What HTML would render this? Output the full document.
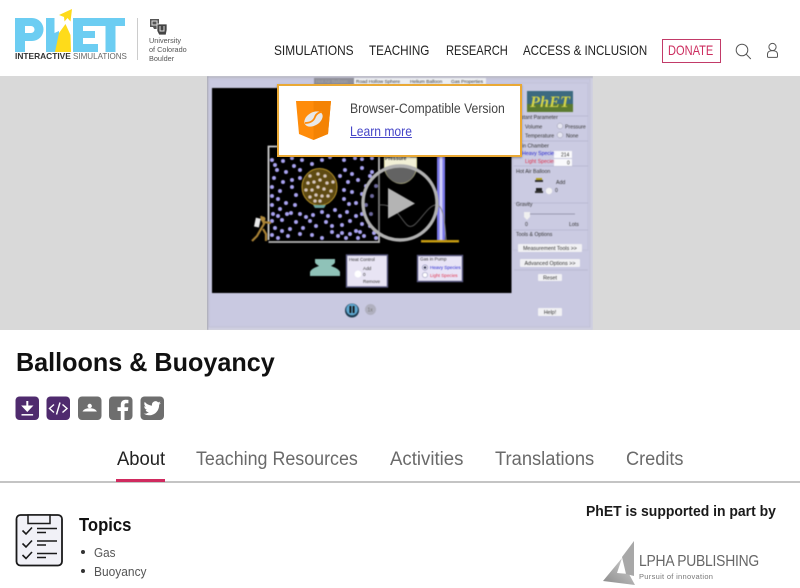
<!DOCTYPE html>
<html><head><meta charset="utf-8"><style>
html,body{margin:0;padding:0;background:#fff}
body{width:800px;height:588px;overflow:hidden;position:relative;font-family:"Liberation Sans",sans-serif}
.t{position:absolute;white-space:nowrap;line-height:1}
.n{top:43px;font-size:14px;color:#222;transform-origin:0 50%}
.tab{top:450px;font-size:19px;color:#6a6a6a;transform-origin:0 50%}
</style></head><body>

<!-- Logo -->
<svg style="position:absolute;left:0;top:0;filter:blur(.3px)" width="200" height="70" viewBox="0 0 200 70">
<path d="M15 18h17a11.500 11.500 0 0 1 0 23h-7v11H15z M25 26v7h6a3.500 3.500 0 0 0 0-7z" fill="#6ccdf2" fill-rule="evenodd"/>
<path d="M46 18h8.500v15l4.500-2v21H46z" fill="#6ccdf2"/>
<path d="M55 52l4-19 6.500-9 5 11 .5 17z" fill="#fedb1a"/>
<path d="M59 15l13-6-1.500 12.500-3-3.500-3 3.500-.5-4.500z" fill="#fedb1a"/>
<path d="M73 18h24v8H83v5h12v7H83v6h15v8H73z" fill="#6ccdf2"/>
<path d="M96 18h29v8h-9.500v26h-10V26H96z" fill="#6ccdf2"/>
<rect x="137" y="18" width="1" height="42" fill="#ccc"/>
<path d="M150 19h9v6h-2v4h-3l-1-2h-3z" fill="#555"/>
<path d="M157 24h10v6l-1 5h-7l-2-4z" fill="#444" stroke="#fff" stroke-width=".7"/>
<path d="M152 21h5v4h-5zM160 26v5h4v-5" fill="none" stroke="#ddd" stroke-width="1"/>
</svg>
<div class="t" style="left:15px;top:52px;font-size:8.400px;font-weight:bold;color:#333;transform-origin:0 50%">INTERACTIVE</div>
<div class="t" style="left:73px;top:52px;font-size:8.400px;color:#666;transform:scaleX(.96);transform-origin:0 50%">SIMULATIONS</div>
<div class="t" style="left:149px;top:37px;font-size:7.300px;line-height:8.800px;color:#555;white-space:pre">University
of Colorado
Boulder</div>

<!-- Nav -->
<div class="t n" style="left:274px;transform:scaleX(.848)">SIMULATIONS</div>
<div class="t n" style="left:369px;transform:scaleX(.835)">TEACHING</div>
<div class="t n" style="left:446px;transform:scaleX(.795)">RESEARCH</div>
<div class="t n" style="left:523px;transform:scaleX(.823)">ACCESS &amp; INCLUSION</div>
<div style="position:absolute;left:662px;top:39px;width:57px;height:22px;border:1px solid #c23a68"></div>
<div class="t n" style="left:668px;color:#cc2c5e;transform:scaleX(.79)">DONATE</div>
<svg style="position:absolute;left:730px;top:38px" width="50" height="26" viewBox="0 0 50 26" fill="none" stroke="#555" stroke-width="1">
<circle cx="12" cy="12" r="5.800"/><path d="M16.200 16.200l4.600 4.800"/>
<circle cx="42.500" cy="9" r="3.600"/><path d="M37.500 18.400v-2.200c0-2.200 2-3.600 5-3.600s5 1.400 5 3.600v2.200a1 1 0 0 1-1 1h-8a1 1 0 0 1-1-1z"/>
</svg>

<!-- Hero -->
<div style="position:absolute;left:0;top:76px;width:800px;height:254px;background:#d9d9d9"></div>
<div style="position:absolute;left:207px;top:76px;width:386px;height:254px;overflow:hidden">
<svg style="position:absolute;left:0;top:0;filter:blur(.4px)" width="386" height="254" viewBox="207 76 386 254">
<rect x="207" y="76" width="386" height="254" fill="#cfcfe0"/>
<rect x="207" y="76" width="386" height="2" fill="#b9b9c8"/>
<rect x="207" y="76" width="1" height="254" fill="#9a9aaa"/>
<rect x="209" y="79" width="381" height="248" fill="#c9c9e1" stroke="#bbbbd0" stroke-width=".6"/>
<rect x="314" y="78" width="40" height="7" fill="#8e8e98"/>
<rect x="354" y="78" width="132" height="7" fill="#eceef2"/>
<g font-family="Liberation Sans" font-size="4.800" fill="#333">
<text x="316" y="83" fill="#aaa">Hot Air Balloon</text><text x="356" y="83">Road Hollow Sphere</text><text x="410" y="83">Helium Balloon</text><text x="451" y="83">Gas Properties</text>
</g>
<rect x="212" y="88" width="299.500" height="205" fill="#000"/>
<!-- Chamber -->
<path d="M268.500 240V146.500H379" fill="none" stroke="#cfcfcf" stroke-width="1.800"/>
<path d="M268.500 242H379V146" fill="none" stroke="#b8b8b8" stroke-width="1.800"/>
<!-- Dots -->
<path stroke="#a8a2f0" stroke-width="4" stroke-linecap="round" fill="none" d="M272 160h0M275 165h0M283 161h0M292 158h0M302 160h0M312 164h0M322 160h0M330 157h0M344 160h0M355 158h0M362 159h0M372 158h0M277 170h0M286 172h0M294 166h0M300 170h0M345 170h0M352 174h0M362 168h0M370 176h0M274 178h0M283 182h0M292 180h0M300 178h0M340 176h0M348 182h0M358 180h0M366 186h0M372 172h0M272 187h0M280 191h0M292 187h0M296 195h0M344 190h0M352 192h0M362 194h0M272 196h0M278 199h0M286 203h0M295 205h0M344 199h0M349 204h0M356 203h0M366 205h0M376 186h0M372 196h0M272 205h0M280 209h0M273 214h0M278 216h0M287 214h0M291 213h0M300 214h0M306 217h0M313 215h0M322 212h0M328 216h0M335 210h0M340 216h0M347 212h0M356 216h0M362 214h0M371 214h0M272 221h0M282 220h0M296 222h0M310 221h0M326 222h0M332 226h0M342 225h0M350 221h0M362 224h0M370 226h0M275 228h0M282 231h0M288 236h0M300 234h0M312 235h0M322 238h0M332 232h0M346 238h0M356 231h0M364 236h0M374 233h0M272 235h0M278 238h0M290 229h0M316 226h0M338 236h0M342 233h0M350 234h0M360 232h0M376 238h0M358 238h0M303 228h0"/>
<!-- Balloon -->
<ellipse cx="319.500" cy="187" rx="17.500" ry="18.500" fill="#5e4a12" stroke="#b5922a" stroke-width="1"/>
<path stroke="#d4c4bc" stroke-width="3.600" stroke-linecap="round" fill="none" d="M310 176h0M318 174h0M325 176h0M308 183h0M314 182h0M320 180h0M327 183h0M333 182h0M306 190h0M312 190h0M318 187h0M324 189h0M331 191h0M310 197h0M316 195h0M322 196h0M328 196h0M315 201h0M320 201h0"/>
<path d="M313 205h13l-2 3h-9z" fill="#6aa5a0"/>
<!-- Person -->
<path d="M261 216l3 8-3 5-4 7-5 5M263 229l3 5v7M264 222l7 1" fill="none" stroke="#a98235" stroke-width="2.200"/>
<rect x="255" y="218" width="5" height="9" fill="#e8e8e8" transform="rotate(12 257 222)"/>
<circle cx="263" cy="219" r="2.500" fill="#b08a3c"/>
<!-- Pump -->
<path d="M315 259h20v3c0 2-3 3-4 4 3 1 8 3 9 6v4h-30v-4c1-3 6-5 9-6-1-1-4-2-4-4z" fill="#8fc2b8"/>
<!-- Heat control -->
<rect x="346.500" y="255" width="41" height="32" fill="#e8e4f4" stroke="#55557d" stroke-width="1.400"/>
<text x="349" y="261" font-size="4.600" fill="#333" font-family="Liberation Sans">Heat Control</text>
<text x="363" y="270" font-size="4.600" fill="#333" font-family="Liberation Sans">Add</text>
<text x="363" y="276" font-size="4.600" fill="#333" font-family="Liberation Sans">0</text>
<text x="363" y="283" font-size="4.600" fill="#333" font-family="Liberation Sans">Remove</text>
<circle cx="358" cy="274" r="3.500" fill="#fff"/>
<!-- Gas in pump -->
<rect x="417.500" y="255.500" width="45" height="26" fill="#e8e4f6" stroke="#55557d" stroke-width="1.400"/>
<text x="420" y="260.500" font-size="4.600" fill="#333" font-family="Liberation Sans">Gas in Pump</text>
<circle cx="425" cy="267.500" r="2.600" fill="#fff" stroke="#7777aa" stroke-width=".6"/><circle cx="425" cy="267.500" r="1.300" fill="#335"/>
<circle cx="425" cy="275" r="2.600" fill="#fff" stroke="#9999bb" stroke-width=".6"/>
<text x="430" y="269" font-size="4.600" fill="#2323d0" font-family="Liberation Sans">Heavy Species</text>
<text x="430" y="277" font-size="4.600" fill="#e0304a" font-family="Liberation Sans">Light Species</text>
<!-- Pole -->
<rect x="437" y="150" width="8" height="90" fill="#7a78e8"/><rect x="439.500" y="150" width="3" height="90" fill="#cfcdf8"/>
<rect x="421" y="240" width="38" height="2.500" fill="#c49a10"/>
<path d="M379 205c16-2 20 12 28 20s18-18 28-20 10 25 11 35" fill="none" stroke="#888" stroke-width="1"/>
<!-- Gauge -->
<path d="M384 157h33v12c-1 7-8 15-16 15s-16-8-17-15z" fill="#e8e6b0"/>
<circle cx="400.500" cy="168" r="15" fill="#999"/>
<path d="M385 157h31v10h-31z" fill="#f2f0d6"/>
<text x="385" y="160" font-size="5" font-weight="bold" fill="#333" font-family="Liberation Sans">Pressure</text>
<!-- Right panel -->
<rect x="513" y="83" width="75" height="167" fill="#cbcbe2" stroke="#bdbdd4" stroke-width=".6"/>
<path d="M514 116h74M514 141h74M514 166h74M514 203h74M514 230h74M514 270h74" stroke="#b5b5cd" stroke-width=".7"/>
<rect x="527" y="91" width="46" height="21" fill="#3c6a80"/>
<rect x="527" y="104" width="46" height="8" fill="#5b7a30"/>
<text x="530" y="107" font-size="16" font-weight="bold" fill="#d3d34a" font-family="Liberation Serif" font-style="italic" textLength="40" lengthAdjust="spacingAndGlyphs">PhET</text>
<g font-family="Liberation Sans" font-size="5.200" fill="#333">
<text x="518" y="119">nstant Parameter</text>
<text x="525" y="128.500">Volume</text><text x="565" y="128.500">Pressure</text>
<text x="525" y="137.500">Temperature</text><text x="566" y="137.500">None</text>
<text x="518" y="147.500">s in Chamber</text>
<text x="522" y="155" fill="#2323d0">Heavy Species</text>
<text x="525" y="163" fill="#e0304a">Light Species</text>
<text x="516" y="173">Hot Air Balloon</text>
<text x="556" y="184">Add</text><text x="555" y="192">0</text>
<text x="516" y="206">Gravity</text>
<text x="525" y="226">0</text><text x="569" y="226">Lots</text>
<text x="516" y="236">Tools &amp; Options</text>
</g>
<circle cx="560" cy="126" r="2.800" fill="#e8e8f2" stroke="#9a9ab0" stroke-width=".5"/>
<circle cx="560" cy="135" r="2.800" fill="#e8e8f2" stroke="#9a9ab0" stroke-width=".5"/>
<rect x="554" y="151" width="18" height="7" fill="#fff" fill-opacity=".9"/><rect x="554" y="159" width="18" height="7" fill="#fff" fill-opacity=".9"/>
<text x="561" y="156.500" font-size="5" fill="#333" font-family="Liberation Sans">214</text><text x="567" y="164.500" font-size="5" fill="#333" font-family="Liberation Sans">0</text>
<path d="M535 180h8v2h-8zM535 191h8v2h-8z" fill="#333"/><path d="M536 178h6v2h-6z" fill="#b0a020"/><path d="M536 188h6v3h-6z" fill="#222"/>
<circle cx="549" cy="191" r="3.200" fill="#f4f4f4"/>
<path d="M527 214h48" stroke="#9a9ab0" stroke-width="1"/><path d="M524 212h6v5l-3 3-3-3z" fill="#f0f0f0"/>
<g font-family="Liberation Sans" font-size="5.300" fill="#333" text-anchor="middle">
<rect x="518" y="244" width="64" height="8" rx="1" fill="#f1f1f4"/><text x="550" y="250">Measurement Tools &gt;&gt;</text>
<rect x="520" y="259" width="60" height="8" rx="1" fill="#f1f1f4"/><text x="550" y="265">Advanced Options &gt;&gt;</text>
<rect x="538" y="274" width="24" height="7" rx="1" fill="#f1f1f4"/><text x="550" y="279.500">Reset</text>
<rect x="538" y="308" width="24" height="8" rx="1" fill="#f1f1f4"/><text x="550" y="314">Help!</text>
</g>
<!-- Pause -->
<circle cx="352" cy="310.500" r="7" fill="#1d3a4f"/><circle cx="352" cy="309.500" r="5.800" fill="#5ea7cf"/>
<rect x="349.500" y="306" width="1.800" height="7" fill="#111"/><rect x="352.700" y="306" width="1.800" height="7" fill="#111"/>
<circle cx="370.500" cy="309.500" r="5.500" fill="#b0b0bf"/><text x="367.500" y="311.500" font-size="5" fill="#777" font-family="Liberation Sans">1x</text>
<!-- Play -->
<circle cx="400" cy="203" r="37" fill="rgba(0,0,0,.35)" stroke="#b0b0b0" stroke-width="3.400"/>
<path d="M388 188l27 15.500-27 15z" fill="#b4b4b4"/>
</svg>
</div>

<!-- Popup -->
<div style="position:absolute;left:277px;top:84px;width:241px;height:69px;background:#fff;border:2px solid #eaa935;box-shadow:0 1px 2px rgba(0,0,0,.3)"></div>
<svg style="position:absolute;left:296px;top:100px" width="36" height="41" viewBox="0 0 36 41">
<path d="M0 1h35l-3 33-14.500 6L3 34z" fill="#ff8c0a"/><path d="M17.500 1H35l-3 33-14.500 6z" fill="#f48304"/>
<ellipse cx="17.500" cy="19" rx="10" ry="6.500" fill="#e8e8e8" transform="rotate(-32 17.500 19)"/>
<path d="M9 23c6 0 9-3 10-6s4-5 7-5" fill="none" stroke="#ff8c0a" stroke-width="1.800"/>
</svg>
<div class="t" style="left:349.500px;top:101.500px;font-size:13.500px;color:#444;transform:scaleX(.905);transform-origin:0 50%">Browser-Compatible Version</div>
<div class="t" style="left:349.500px;top:124px;font-size:14px;color:#4646c8;text-decoration:underline;transform:scaleX(.865);transform-origin:0 50%">Learn more</div>

<!-- Title -->
<div class="t" style="left:16px;top:349px;font-size:26px;font-weight:bold;color:#111;transform:scaleX(.968);transform-origin:0 50%">Balloons &amp; Buoyancy</div>

<!-- Share icons -->
<svg style="position:absolute;left:15px;top:396px" width="150" height="25" viewBox="0 0 150 25">
<rect x="0.500" y="0.500" width="23.500" height="23.500" rx="4" fill="#4f2b6e"/>
<path d="M12.300 5v7M8.500 10.500l3.800 4 3.800-4z" fill="#fff" stroke="#fff" stroke-width="2"/><path d="M6.500 18.800h11.600" stroke="#fff" stroke-width="1.500"/>
<rect x="31.500" y="0.500" width="23.500" height="23.500" rx="4" fill="#4f2b6e"/>
<path d="M39 8.500l-4.500 4 4.500 4M47.500 8.500l4.500 4-4.500 4M45 6.500l-3.500 12" fill="none" stroke="#fff" stroke-width="1.400"/>
<rect x="63" y="0.500" width="23.500" height="23.500" rx="4" fill="#6e6e6e"/>
<circle cx="74.700" cy="10" r="2.200" fill="#fff"/><path d="M67.500 15.500c1.500-2.500 4-3.200 7.200-3.200s5.700.7 7.200 3.200z" fill="#fff"/>
<rect x="94" y="0.500" width="23.500" height="23.500" rx="4" fill="#6e6e6e"/>
<path d="M109.500 24v-9h3.300l.5-3.700h-3.800V9c0-1.100.4-1.800 1.900-1.800h2V3.900c-.4 0-1.500-.2-2.800-.2-2.900 0-4.800 1.700-4.800 4.900v2.700H102.500V15h3.300v9z" fill="#fff"/>
<rect x="125.500" y="0.500" width="23.500" height="23.500" rx="4" fill="#6e6e6e"/>
<path transform="translate(128.600 3.600) scale(.72)" d="M23.953 4.570a10 10 0 0 1-2.825.775 4.958 4.958 0 0 0 2.163-2.723c-.951.555-2.005.959-3.127 1.184a4.920 4.920 0 0 0-8.384 4.482C7.690 8.095 4.067 6.130 1.640 3.162a4.822 4.822 0 0 0-.666 2.475c0 1.710.870 3.213 2.188 4.096a4.904 4.904 0 0 1-2.228-.616v.060a4.923 4.923 0 0 0 3.946 4.827 4.996 4.996 0 0 1-2.212.085 4.936 4.936 0 0 0 4.604 3.417 9.867 9.867 0 0 1-6.102 2.105c-.390 0-.779-.023-1.170-.067a13.995 13.995 0 0 0 7.557 2.209c9.053 0 13.998-7.496 13.998-13.985 0-.210 0-.420-.015-.630A9.935 9.935 0 0 0 24 4.590z" fill="#fff"/>
</svg>

<!-- Tabs -->
<div class="t tab" style="left:116.500px;color:#222;transform:scaleX(.97)">About</div>
<div class="t tab" style="left:196px;transform:scaleX(.94)">Teaching Resources</div>
<div class="t tab" style="left:390px;transform:scaleX(.98)">Activities</div>
<div class="t tab" style="left:495px;transform:scaleX(.965)">Translations</div>
<div class="t tab" style="left:626px;transform:scaleX(.955)">Credits</div>
<div style="position:absolute;left:0;top:481px;width:800px;height:2px;background:#c4c4c4"></div>
<div style="position:absolute;left:116px;top:479px;width:49px;height:3px;background:#d02a5f"></div>

<!-- Topics -->
<svg style="position:absolute;left:15px;top:513px" width="49" height="54" viewBox="0 0 49 54">
<rect x="1.500" y="2" width="45.500" height="50.500" rx="4" fill="#f1f1f7" stroke="#1a1a1a" stroke-width="1.800"/>
<rect x="13" y="2" width="22" height="8.500" fill="#f1f1f7" stroke="#1a1a1a" stroke-width="1.500"/>
<path d="M7.500 17.500l3.500 3.500 6-6.500M7.500 30.500l3.500 3.500 6-6.500M7.500 42l3.500 3.500 6-6.500" fill="none" stroke="#1a1a1a" stroke-width="1.600"/>
<path d="M22 15.500h20M22 19.500h9M22 28h20M22 32h9M22 40.500h20M22 44.500h9" stroke="#1a1a1a" stroke-width="1.500"/>
</svg>
<div class="t" style="left:78.500px;top:516px;font-size:18.500px;font-weight:bold;color:#111;transform:scaleX(.9);transform-origin:0 50%">Topics</div>
<div class="t" style="left:94px;top:546px;font-size:13px;color:#555;transform:scaleX(.9);transform-origin:0 50%">Gas</div>
<div class="t" style="left:94px;top:565px;font-size:13px;color:#555;transform:scaleX(.92);transform-origin:0 50%">Buoyancy</div>
<div style="position:absolute;left:81px;top:550px;width:4px;height:4px;border-radius:50%;background:#333"></div>
<div style="position:absolute;left:81px;top:569px;width:4px;height:4px;border-radius:50%;background:#333"></div>

<!-- Sponsor -->
<div class="t" style="left:586px;top:503.500px;font-size:15px;font-weight:bold;color:#1a1a1a;transform:scaleX(.93);transform-origin:0 50%">PhET is supported in part by</div>
<svg style="position:absolute;left:600px;top:538px" width="40" height="50" viewBox="0 0 40 50">
<defs><linearGradient id="g" x1="0" y1="1" x2="1" y2="0"><stop offset="0" stop-color="#8a8a8a"/><stop offset="1" stop-color="#d4d4d4"/></linearGradient></defs>
<path d="M3 43L22 20l-5 15 12 1 6 11z" fill="url(#g)"/>
<path d="M34 3v35l-8-2-4-17z" fill="#a8a8a8"/>
</svg>
<div class="t" style="left:639px;top:554px;font-size:15.500px;color:#666;letter-spacing:-.25px;transform:scaleX(.895);transform-origin:0 50%">LPHA PUBLISHING</div>
<div class="t" style="left:639px;top:573px;font-size:7.500px;color:#777;letter-spacing:.3px">Pursuit of innovation</div>
</body></html>
